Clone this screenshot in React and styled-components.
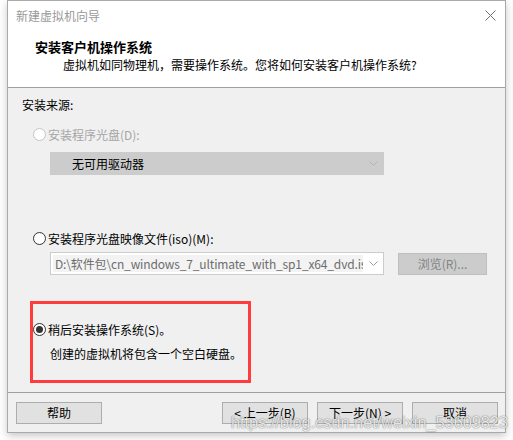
import React from "react";
import styled, { createGlobalStyle, css } from "styled-components";

const GlobalStyle = createGlobalStyle`
  *, *::before, *::after {
    box-sizing: border-box;
  }
  body {
    margin: 0;
    background: #ffffff;
    font-family: "Noto Sans CJK SC", "Noto Sans", sans-serif;
    font-size: 12px;
    color: #000000;
  }
`;

function Chevron({ color }) {
  return (
    <svg width="9" height="5" viewBox="0 0 9 5">
      <polyline
        points="0.5,0.5 4.5,4.5 8.5,0.5"
        fill="none"
        stroke={color}
        strokeWidth="1"
      />
    </svg>
  );
}

function App() {
  return (
    <>
      <GlobalStyle />
      <Page>
        <Window>
          <TitleBar>
            <TitleText>新建虚拟机向导</TitleText>
            <CloseButton>
              <svg width="11" height="11" viewBox="0 0 11 11">
                <path d="M0.5 0.5 L10.5 10.5 M10.5 0.5 L0.5 10.5" stroke="#6f6f6f" strokeWidth="1" />
              </svg>
            </CloseButton>
          </TitleBar>
          <Header>
            <Heading>安装客户机操作系统</Heading>
            <SubTitle>虚拟机如同物理机，需要操作系统。您将如何安装客户机操作系统?</SubTitle>
          </Header>
          <Body>
            <SectionLabel>安装来源:</SectionLabel>

            <RadioRow top={13} disabled>
              <Radio disabled />
              <span>安装程序光盘(D):</span>
            </RadioRow>
            <ComboRow top={10}>
              <Combo disabled>
                <ComboText>无可用驱动器</ComboText>
                <Chevron color="#b4b4b4" />
              </Combo>
            </ComboRow>

            <RadioRow top={55}>
              <Radio />
              <span>安装程序光盘映像文件(iso)(M):</span>
            </RadioRow>
            <ComboRow top={6}>
              <Combo>
                <PathField>D:\软件包\cn_windows_7_ultimate_with_sp1_x64_dvd.iso</PathField>
                <Chevron color="#9a9a9a" />
              </Combo>
              <Button disabled width={89}>浏览(R)...</Button>
            </ComboRow>

            <RadioRow top={46}>
              <Radio checked />
              <span>稍后安装操作系统(S)。</span>
            </RadioRow>
            <Description>创建的虚拟机将包含一个空白硬盘。</Description>
          </Body>
          <Footer>
            <Button>帮助</Button>
            <FooterRight>
              <Button>&lt; 上一步(B)</Button>
              <Button>下一步(N) &gt;</Button>
              <Button>取消</Button>
            </FooterRight>
          </Footer>
          <Highlight />
        </Window>
        <Watermark>https://blog.csdn.net/weixin_53609823</Watermark>
      </Page>
    </>
  );
}

export default App;

const Page = styled.div`
  position: relative;
  width: 513px;
  height: 440px;
  padding-left: 7px;
`;

const Window = styled.div`
  position: relative;
  display: flex;
  flex-direction: column;
  width: 499px;
  height: 433px;
  border: 1px solid #a9a9a9;
  background: #f0f0f0;
  box-shadow: 0 3px 8px rgba(0, 0, 0, 0.22);
`;

const TitleBar = styled.div`
  display: flex;
  align-items: center;
  justify-content: space-between;
  height: 29px;
  padding: 0 9px 0 8px;
  background: #ffffff;
`;

const TitleText = styled.div`
  color: #999999;
  font-size: 12px;
  line-height: 16px;
`;

const CloseButton = styled.div`
  display: flex;
  align-items: center;
  margin-top: -1px;
`;

const Header = styled.div`
  display: flex;
  flex-direction: column;
  height: 58px;
  padding: 9px 0 0 27px;
  background: #ffffff;
  border-bottom: 1px solid #a0a0a0;
`;

const Heading = styled.div`
  font-weight: 700;
  font-size: 13px;
  line-height: 16px;
`;

const SubTitle = styled.div`
  margin: 2px 0 0 28px;
  line-height: 16px;
`;

const Body = styled.div`
  display: flex;
  flex-direction: column;
  height: 304px;
  padding: 9px 0 0 14px;
`;

const SectionLabel = styled.div`
  line-height: 16px;
`;

const RadioRow = styled.div`
  display: flex;
  align-items: center;
  gap: 2px;
  height: 16px;
  margin: ${(p) => p.top}px 0 0 11px;
  color: ${(p) => (p.disabled ? "#a6a6a6" : "#000000")};
`;

const Radio = styled.span`
  position: relative;
  width: 13px;
  height: 13px;
  border-radius: 50%;
  background: #ffffff;
  border: 1px solid ${(p) => (p.disabled ? "#c4c4c4" : "#333333")};
  ${(p) =>
    p.checked &&
    css`
      &::after {
        content: "";
        position: absolute;
        left: 2px;
        top: 2px;
        width: 7px;
        height: 7px;
        border-radius: 50%;
        background: #333333;
      }
    `}
`;

const ComboRow = styled.div`
  display: flex;
  align-items: center;
  gap: 14px;
  margin: ${(p) => p.top}px 0 0 28px;
`;

const Combo = styled.div`
  display: flex;
  align-items: center;
  justify-content: space-between;
  width: 334px;
  height: 23px;
  padding: 2px 5px 2px 2px;
  border: 1px solid #cccccc;
  background: ${(p) => (p.disabled ? "#cccccc" : "#ffffff")};
`;

const ComboText = styled.div`
  padding-left: 19px;
  line-height: 16px;
  color: #000000;
`;

const PathField = styled.div`
  width: 310px;
  height: 17px;
  padding-left: 2px;
  overflow: hidden;
  white-space: nowrap;
  line-height: 17px;
  font-size: 12px;
  letter-spacing: -0.15px;
  color: #6d6d6d;
  background: #f3f3f3;
`;

const Description = styled.div`
  margin: 9px 0 0 28px;
  line-height: 16px;
`;

const Footer = styled.div`
  display: flex;
  align-items: flex-start;
  justify-content: space-between;
  flex: 1;
  padding: 9px 7px 0 8px;
  border-top: 1px solid #a0a0a0;
`;

const FooterRight = styled.div`
  display: flex;
  gap: 9px;
`;

const Button = styled.div`
  display: flex;
  align-items: center;
  justify-content: center;
  width: ${(p) => p.width || 86}px;
  height: 22px;
  border: 1px solid ${(p) => (p.disabled ? "#bfbfbf" : "#adadad")};
  background: ${(p) => (p.disabled ? "#cccccc" : "#e1e1e1")};
  color: ${(p) => (p.disabled ? "#838383" : "#000000")};
  font-size: 12px;
  line-height: 16px;
`;

const Highlight = styled.div`
  position: absolute;
  left: 22px;
  top: 300px;
  width: 221px;
  height: 82px;
  border: 3px solid #ff3b3b;
  pointer-events: none;
`;

const Watermark = styled.div`
  position: absolute;
  left: 231px;
  top: 412px;
  font-family: "Liberation Sans", Arial, sans-serif;
  font-size: 16.3px;
  line-height: 20px;
  color: rgba(255, 255, 255, 0.85);
  text-shadow: 0 0 1px rgba(0, 0, 0, 0.5), 0 0 2px rgba(0, 0, 0, 0.25);
  white-space: nowrap;
  pointer-events: none;
`;
